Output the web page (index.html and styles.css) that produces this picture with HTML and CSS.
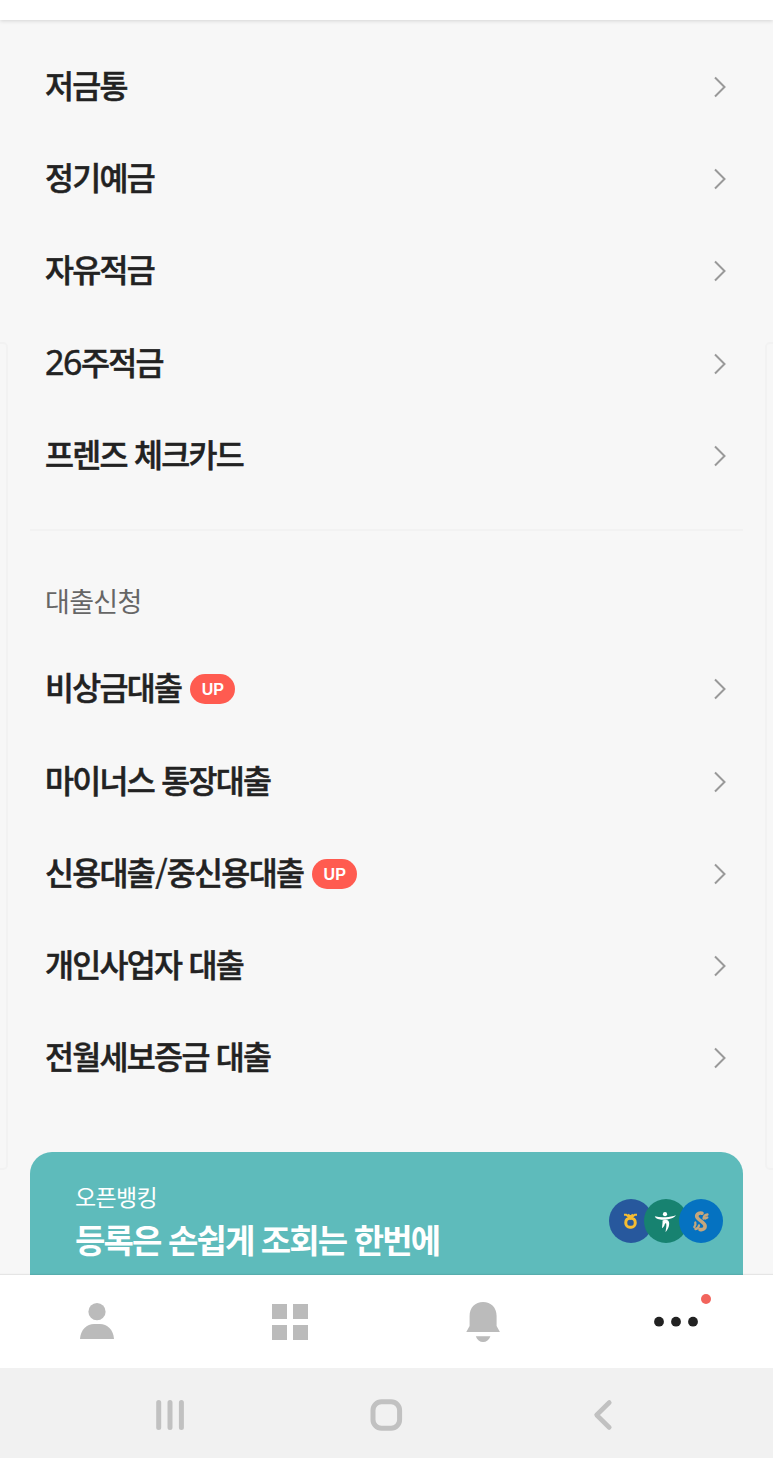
FILE: index.html
```html
<!DOCTYPE html>
<html lang="ko">
<head>
  <meta charset="UTF-8">
  <meta name="viewport" content="width=device-width, initial-scale=1.0">
  <title>전체</title>
  <link rel="stylesheet" href="styles.css">
</head>
<body>
  <div class="app">
    <header class="top-bar"></header>

    <main class="content">
      <div class="side-card side-left"></div>
      <div class="side-card side-right"></div>

      <ul class="menu">
        <li><span class="name">저금통</span><svg class="arrow" viewBox="0 0 14 22"><path d="M2 1.5 11.5 11 2 20.5"/></svg></li>
        <li><span class="name">정기예금</span><svg class="arrow" viewBox="0 0 14 22"><path d="M2 1.5 11.5 11 2 20.5"/></svg></li>
        <li><span class="name">자유적금</span><svg class="arrow" viewBox="0 0 14 22"><path d="M2 1.5 11.5 11 2 20.5"/></svg></li>
        <li><span class="name"><span class="num">26</span>주적금</span><svg class="arrow" viewBox="0 0 14 22"><path d="M2 1.5 11.5 11 2 20.5"/></svg></li>
        <li><span class="name">프렌즈 체크카드</span><svg class="arrow" viewBox="0 0 14 22"><path d="M2 1.5 11.5 11 2 20.5"/></svg></li>
      </ul>

      <h2 class="menu-title">대출신청</h2>
      <ul class="menu">
        <li><span class="name">비상금대출</span><span class="badge">UP</span><svg class="arrow" viewBox="0 0 14 22"><path d="M2 1.5 11.5 11 2 20.5"/></svg></li>
        <li><span class="name">마이너스 통장대출</span><svg class="arrow" viewBox="0 0 14 22"><path d="M2 1.5 11.5 11 2 20.5"/></svg></li>
        <li><span class="name">신용대출<span class="slash">/</span>중신용대출</span><span class="badge">UP</span><svg class="arrow" viewBox="0 0 14 22"><path d="M2 1.5 11.5 11 2 20.5"/></svg></li>
        <li><span class="name">개인사업자 대출</span><svg class="arrow" viewBox="0 0 14 22"><path d="M2 1.5 11.5 11 2 20.5"/></svg></li>
        <li><span class="name">전월세보증금 대출</span><svg class="arrow" viewBox="0 0 14 22"><path d="M2 1.5 11.5 11 2 20.5"/></svg></li>
      </ul>

      <section class="banner">
        <div class="banner-text">
          <p class="banner-sub">오픈뱅킹</p>
          <p class="banner-main">등록은 손쉽게 조회는 한번에</p>
        </div>
        <div class="banks">
          <svg class="bank bank-nh" viewBox="0 0 44 44">
            <g fill="none" stroke="#f6bd32">
              <rect x="16.8" y="19.2" width="9.4" height="9" rx="4" stroke-width="3"/>
              <path d="M15 15.8h2.3l4.2 3.6 4.2-3.6H28M19 15.5l2.5 2 2.500-2" stroke-width="2"/>
            </g>
          </svg>
          <svg class="bank bank-hana" viewBox="0 0 44 44">
            <g fill="#fff">
              <circle cx="21" cy="15.2" r="2.1"/>
              <path d="M10.800 17.200c3.500 1.100 7.200 1.300 10.700 1 4-.3 7.500-.8 10.500-2-1.500 2.300-4.500 3.600-9 4.200-5.200.7-10.900.3-12.200-3.200z"/>
              <path d="M18.500 21.500c3.500-1.400 7-.7 6.700 3.300-.2 3.400-1.500 6-3.700 8.400.4-3.300 1.200-5.700.7-8.600-.5-.4-1-.3-1.400.3-.5 2-1.300 3.400-2.800 4.300.2-3 .700-5.300.5-7.700z"/>
            </g>
          </svg>
          <svg class="bank bank-sh" viewBox="0 0 44 44">
            <g fill="none" stroke="#c5a67c" stroke-linecap="round">
              <path d="M23 14.200c-4-1-6.500 2-4.500 4.800s7 4.500 7.500 7.500-2.200 4.700-5 4" stroke-width="3.600"/>
              <path d="M28.500 15.500c-2.300.3-3.700 1.800-4 4M28.300 18.500l-2 1M16.300 23.500c.7 2.500-.2 3.500-1 4.500M16.500 30c1.800-.3 3.200-1.700 3.500-3.700" stroke-width="2.300"/>
            </g>
          </svg>
        </div>
      </section>
    </main>

    <nav class="tab-bar">
      <a class="tab">
        <svg class="tab-icon" viewBox="0 0 44 44" fill="#bbb">
          <circle cx="22" cy="11.7" r="8.6"/>
          <path d="M5 39C5.500 29.500 12 24 19 24h6c7 0 13.500 5.500 14 15z"/>
        </svg>
      </a>
      <a class="tab">
        <svg class="tab-icon" viewBox="0 0 44 44" fill="#bbb">
          <path d="M4 4h15v15H4zM25 4h15v15H25zM4 25h15v15H4zM25 25h15v15H25z"/>
        </svg>
      </a>
      <a class="tab">
        <svg class="tab-icon" viewBox="0 0 44 44" fill="#bbb">
          <path d="M5.300 32l3.300-6V16C8.600 7.500 14.300 2 22.100 2s13.500 5.500 13.500 14v10l3.300 6z"/>
          <path d="M14.800 36.200h14.600c-1.300 3.900-4 5.800-7.300 5.800s-6-1.900-7.300-5.800z"/>
        </svg>
      </a>
      <a class="tab">
        <svg class="tab-icon" viewBox="0 0 44 44" fill="#222">
          <circle cx="5" cy="21.7" r="4.9"/>
          <circle cx="22" cy="21.7" r="4.9"/>
          <circle cx="39" cy="21.7" r="4.9"/>
        </svg>
        <span class="dot"></span>
      </a>
    </nav>

    <footer class="system-bar">
      <svg viewBox="0 0 40 40"><path d="M8.700 7.500v25M20 7.500v25M31.400 7.500v25" stroke-width="5"/></svg>
      <svg viewBox="0 0 40 40"><rect x="7" y="6.700" width="26.600" height="26.600" rx="8.500" stroke-width="5"/></svg>
      <svg viewBox="0 0 40 40"><path d="M26.300 7.500 13.600 20l12.700 12.500" stroke-width="4.600"/></svg>
    </footer>
  </div>
</body>
</html>
```

FILE: styles.css
```css
* {
  margin: 0;
  padding: 0;
  box-sizing: border-box;
}

body {
  font-family: 'Noto Sans CJK KR', sans-serif;
  color: #222;
  background: #f7f7f7;
}

.app {
  height: 1458px;
  display: flex;
  flex-direction: column;
  overflow: hidden;
}

.top-bar {
  flex: none;
  height: 20px;
  background: #fff;
  box-shadow: 0 1px 4px rgba(0, 0, 0, 0.14);
  position: relative;
  z-index: 1;
}

.content {
  flex: 1;
  min-height: 0;
  padding: 20.6px 30px 0;
  overflow: hidden;
  position: relative;
}

/* edges of the neighbouring pages */
.side-card {
  position: absolute;
  top: 322px;
  width: 30px;
  height: 828px;
  border: 2px solid #f2f2f2;
  border-radius: 5px;
}

.side-left { left: -22px; }
.side-right { right: -22px; }

.menu {
  list-style: none;
  padding: 0 15px;
}

.menu li {
  height: 92.3px;
  display: flex;
  align-items: center;
}

.name {
  padding-bottom: 6px;
  font-size: 31.5px;
  line-height: 48px;
  font-weight: 500;
  letter-spacing: -1.7px;
  white-space: nowrap;
  -webkit-text-stroke: 0.5px #222;
}

.num {
  font-family: 'Noto Sans', sans-serif;
  font-size: 34px;
  font-weight: 400;
  line-height: 1;
  letter-spacing: -1.5px;
}

.slash {
  padding: 0 1px;
  font-weight: 400;
}

.badge {
  width: 45px;
  height: 30px;
  margin-left: 9px;
  border-radius: 15px;
  background: #ff5b50;
  color: #fff;
  font-family: 'Liberation Sans', sans-serif;
  font-size: 16px;
  font-weight: 700;
  line-height: 31px;
  text-align: center;
}

.arrow {
  width: 14px;
  height: 22px;
  margin-left: auto;
  margin-right: 1px;
  fill: none;
  stroke: #999;
  stroke-width: 2;
}

.menu-title {
  height: 114px;
  margin-top: 27px;
  padding: 50px 15px 0;
  border-top: 2px solid #f2f2f2;
  color: #666;
  font-size: 27px;
  line-height: 39px;
  font-weight: 400;
  letter-spacing: -0.7px;
}

.banner {
  height: 170px;
  margin-top: 47px;
  padding: 28px 20px 0 45px;
  border-radius: 22px;
  background: #5ebbbb;
  color: #fff;
  display: flex;
  justify-content: space-between;
}

.banner-sub {
  font-size: 23px;
  line-height: 32px;
  letter-spacing: -0.7px;
}

.banner-main {
  margin-top: 4px;
  font-size: 33px;
  line-height: 46px;
  font-weight: 700;
  letter-spacing: -1.85px;
  white-space: nowrap;
}

.banks {
  display: flex;
  padding-top: 19px;
}

.bank {
  width: 44px;
  height: 44px;
  border-radius: 50%;
}

.bank + .bank { margin-left: -9.2px; }

.bank-nh { background: #27589d; }
.bank-hana { background: #178270; }
.bank-sh { background: #0572c1; }

.tab-bar {
  flex: none;
  height: 93px;
  background: #fff;
  box-shadow: 0 -1px 1px rgba(0, 0, 0, 0.07);
  display: flex;
  position: relative;
}

.tab {
  flex: 1;
  display: flex;
  align-items: center;
  justify-content: center;
  position: relative;
}

.tab-icon {
  width: 44px;
  height: 44px;
  overflow: visible;
}

.dot {
  position: absolute;
  top: 19px;
  right: 62px;
  width: 10px;
  height: 10px;
  border-radius: 50%;
  background: #f2645c;
}

.system-bar {
  flex: none;
  height: 90px;
  padding: 4px 62px 0;
  background: #f1f1f1;
  display: flex;
  justify-content: space-around;
  align-items: center;
}

.system-bar svg {
  width: 40px;
  height: 40px;
  fill: none;
  stroke: #c1c1c1;
  stroke-linecap: round;
  stroke-linejoin: round;
}
```
